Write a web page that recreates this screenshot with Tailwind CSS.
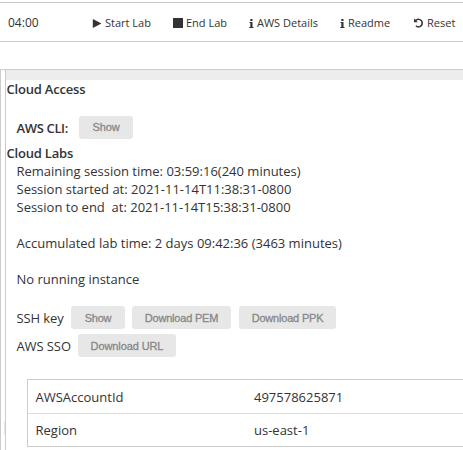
<!DOCTYPE html>
<html lang="en">
<head>
<meta charset="utf-8">
<title>Cloud Lab</title>
<script src="https://cdn.jsdelivr.net/npm/@tailwindcss/browser@4"></script>
</head>
<body class="w-[463px] h-[450px] overflow-hidden bg-white font-['Open_Sans',sans-serif] text-[13px] leading-[18px] text-[#333] whitespace-nowrap">
<div class="flex h-full flex-col pt-[2px]">
  <header class="flex h-10 shrink-0 items-center border-t border-b border-t-[#c3c8cd] border-b-[#ccc] pl-2 pt-[2px] text-[11px]">
    <span class="w-[84px] text-[12px]">04:00</span>
    <button class="flex w-[81px] items-center gap-1">
      <svg class="h-[9px] w-[9px]" viewBox="0 0 9 9" fill="#333"><path d="M.8 0v9L9 4.8v-.6z"/></svg><span>Start Lab</span>
    </button>
    <button class="flex w-[76px] items-center gap-[3px]">
      <svg class="h-[10px] w-[10px]" viewBox="0 0 10 10" fill="#333"><path d="M0 0h10v10H0z"/></svg><span>End Lab</span>
    </button>
    <button class="flex w-[91px] items-center gap-[3px]">
      <svg class="h-[9px] w-[5px]" viewBox="0 0 5 9" fill="#333"><path d="M1.3 0h2.2v2H1.3zM.5 3h3v5h1v1H.3V8h1V4H.5z"/></svg><span>AWS Details</span>
    </button>
    <button class="flex w-[74px] items-center gap-[3px]">
      <svg class="h-[9px] w-[5px]" viewBox="0 0 5 9" fill="#333"><path d="M1.3 0h2.2v2H1.3zM.5 3h3v5h1v1H.3V8h1V4H.5z"/></svg><span>Readme</span>
    </button>
    <button class="flex items-center gap-[4px]">
      <svg class="h-[10px] w-[9px]" viewBox="0 0 9 10" fill="none"><path d="M1.5 2.6C4 .1 8.2 1.6 8.2 5c0 3.6-4 5-6.3 2.8" stroke="#333" stroke-width="1.5"/><path d="M0 .6V4.3h3.8z" fill="#333"/></svg><span>Reset</span>
    </button>
  </header>
  <main class="mt-[27px] flex min-h-0 grow">
    <div class="flex w-[5px] shrink-0 flex-col items-end border-t border-l border-[#ccc] pt-[351px]"><div class="h-[14px] w-px bg-[#e8e8e8]"></div></div>
    <section class="flex grow flex-col border-t border-l border-[#ccc]">
      <div class="h-[10px] shrink-0 bg-[#ededed]"></div>
      <h2 class="ml-[0.5px] font-semibold tracking-[-0.2px]">Cloud Access</h2>
      <div class="ml-[10.5px] mt-[18px] flex h-[23px] items-center">
        <span class="w-[62.5px] font-semibold tracking-[-0.35px]">AWS CLI:</span>
        <button class="h-[23px] w-[54px] rounded-[3px] bg-[#e7e7e7] font-['Liberation_Sans',sans-serif] text-[11px] leading-[23px] tracking-[-0.1px] text-[#888] [-webkit-text-stroke:0.3px_#888]">Show</button>
      </div>
      <h2 class="ml-[0.5px] mt-[5px] font-semibold tracking-[-0.2px]">Cloud Labs</h2>
      <div class="ml-[10.5px]">
        <p>Remaining session time: 03:59:16(240 minutes)</p>
        <p>Session started at: 2021-11-14T11:38:31-0800</p>
        <p>Session to end&nbsp; at: 2021-11-14T15:38:31-0800</p>
        <p class="mt-[18px]">Accumulated lab time: 2 days 09:42:36 (3463 minutes)</p>
        <p class="mt-[18px]">No running instance</p>
      </div>
      <div class="ml-[10.5px] mt-[18px] flex h-[23px] items-center font-['Liberation_Sans',sans-serif] text-[11px] tracking-[-0.2px] text-[#888]">
        <span class="w-[54.5px] font-['Open_Sans',sans-serif] text-[13px] tracking-[-0.1px] text-[#333]">SSH key</span>
        <button class="h-[23px] w-[54px] rounded-[3px] bg-[#e7e7e7] [-webkit-text-stroke:0.3px_#888]">Show</button>
        <button class="ml-[7px] h-[23px] w-[99px] rounded-[3px] bg-[#e7e7e7] [-webkit-text-stroke:0.3px_#888]">Download PEM</button>
        <button class="ml-2 h-[23px] w-[97px] rounded-[3px] bg-[#e7e7e7] [-webkit-text-stroke:0.3px_#888]">Download PPK</button>
      </div>
      <div class="ml-[10.5px] mt-[5px] flex h-[23px] items-center font-['Liberation_Sans',sans-serif] text-[11px] tracking-[-0.1px] text-[#888]">
        <span class="w-[61.5px] font-['Open_Sans',sans-serif] text-[13px] text-[#333]">AWS SSO</span>
        <button class="h-[23px] w-[98px] rounded-[3px] bg-[#e7e7e7] [-webkit-text-stroke:0.3px_#888]">Download URL</button>
      </div>
      <div class="ml-[21px] mt-[22px] border-t border-b border-l border-[#ccc]">
        <div class="flex h-[34px] items-center border-b border-[#ddd] pl-[7.5px]"><span class="w-[218.5px]">AWSAccountId</span><span>497578625871</span></div>
        <div class="flex h-8 items-center pl-[7.5px]"><span class="w-[218.5px]">Region</span><span>us-east-1</span></div>
      </div>
    </section>
  </main>
</div>
</body>
</html>
